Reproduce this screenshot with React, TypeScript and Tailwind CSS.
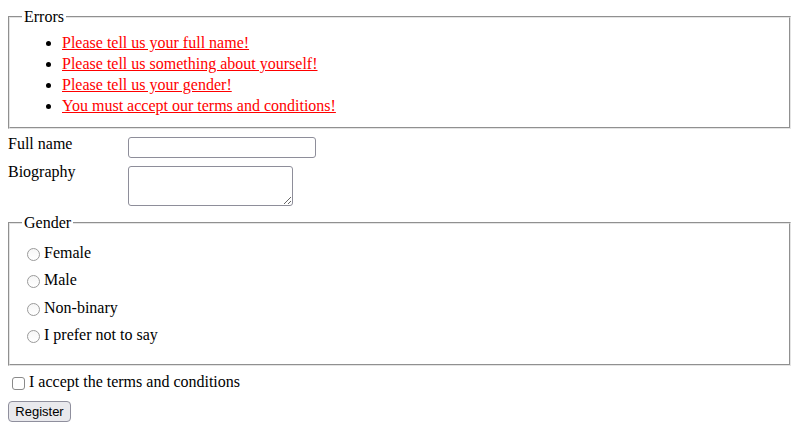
import React from "react";

const errors = [
  "Please tell us your full name!",
  "Please tell us something about yourself!",
  "Please tell us your gender!",
  "You must accept our terms and conditions!",
];

const genders = ["Female", "Male", "Non-binary", "I prefer not to say"];

export default function App() {
  return (
    <div className="min-h-screen bg-white p-2 text-[16px] leading-[18px] text-black font-['Liberation_Serif','Times_New_Roman',serif]">
      <form className="flex flex-col gap-2">
        {/* error summary */}
        <fieldset className="border-2 [border-style:groove] border-[#e4e4e4] px-3 pt-[6px] pb-[11px]">
          <legend className="px-0.5 leading-[18px]">Errors</legend>
          <ul className="list-disc pl-10">
            {errors.map((msg) => (
              <li key={msg} className="leading-[21px]">
                <a href="#" className="text-[#ff0000] underline">
                  {msg}
                </a>
              </li>
            ))}
          </ul>
        </fieldset>

        <div className="grid grid-cols-[120px_auto] items-start gap-y-2">
          <label htmlFor="fullname" className="-mt-0.5 leading-[18px]">Full name</label>
          <input
            id="fullname"
            type="text"
            className="h-[21px] w-[188px] rounded-[3px] border border-[#8e8e9a] bg-white px-1 text-[13px] outline-none"
          />
          <label htmlFor="bio" className="-mt-[3px] leading-[18px]">Biography</label>
          <textarea
            id="bio"
            className="block h-[40px] w-[165px] resize rounded-[3px] border border-[#8e8e9a] bg-white px-1 text-[13px] outline-none"
          />
        </div>

        <fieldset className="border-2 [border-style:groove] border-[#e4e4e4] px-3 pt-[7px] pb-[15px]">
          <legend className="px-0.5 leading-[18px]">Gender</legend>
          {genders.map((g) => (
            <label key={g} className="flex h-[27.5px] items-center">
              <input
                type="radio"
                name="gender"
                className="ml-[5px] mr-[4px] mt-[3px] h-[13px] w-[13px] appearance-none rounded-full border border-[#9a9a9a] bg-gradient-to-b from-[#f6f6f6] to-white"
              />
              <span>{g}</span>
            </label>
          ))}
        </fieldset>

        <label className="flex h-[15px] items-center">
          <input
            type="checkbox"
            className="ml-1 mr-1 mt-[3px] h-[13px] w-[13px] appearance-none rounded-[3px] border border-[#8a8a8a] bg-white"
          />
          <span>I accept the terms and conditions</span>
        </label>

        <div className="pt-[4px]">
          <button
            type="button"
            className="h-[21px] w-[63px] rounded-[4px] border border-[#8f8f9d] bg-[#e9e9ed] text-[13px] leading-[19px] font-['Liberation_Sans',Arial,sans-serif]"
          >
            Register
          </button>
        </div>
      </form>
    </div>
  );
}
